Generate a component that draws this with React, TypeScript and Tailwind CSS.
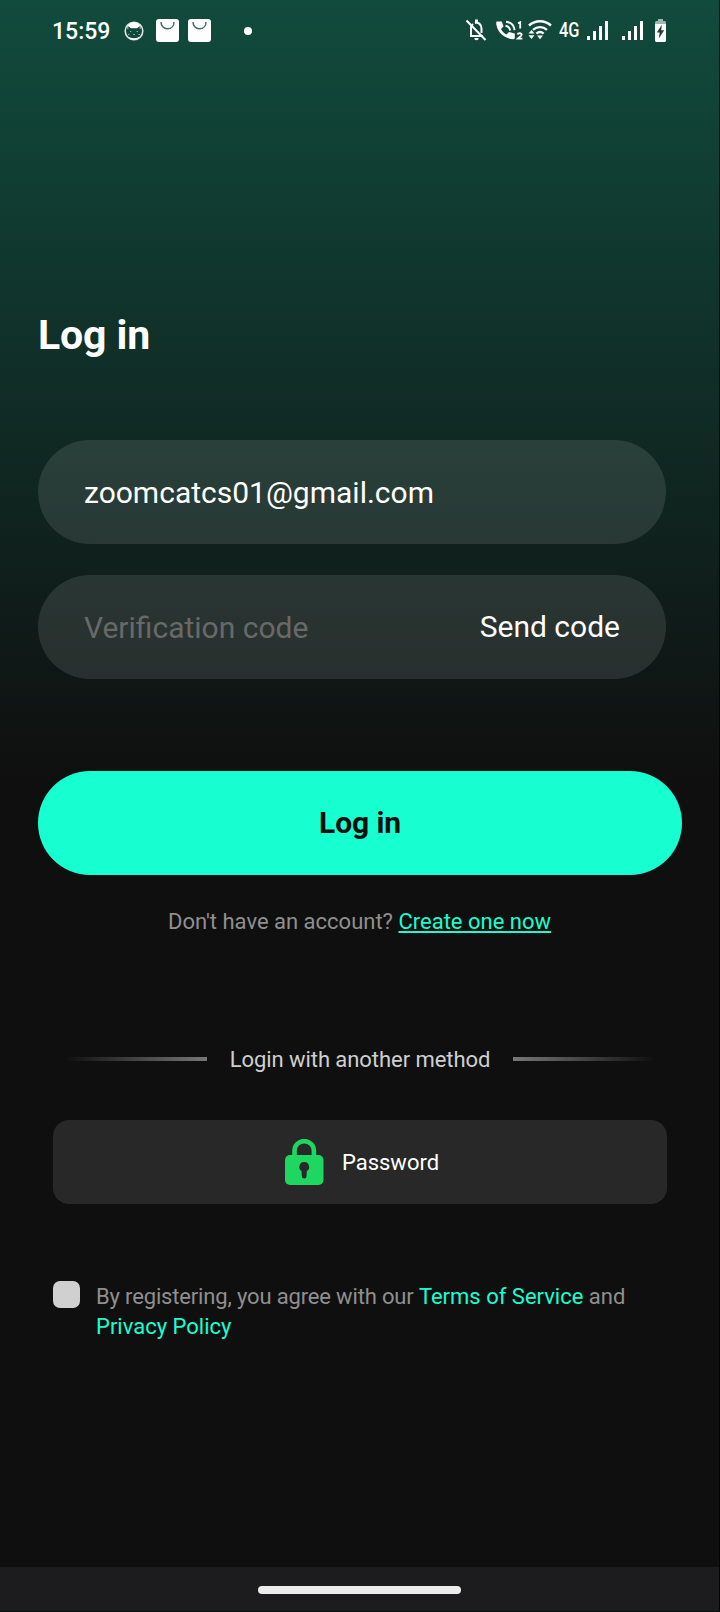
import React from "react";

function BellOff() {
  return (
    <svg className="block h-6 w-[23px]" viewBox="0 0 23 24" fill="none">
      <path d="M5 18h13M6 18V10.500a5 5.500 0 0 1 2-4.500M10 5a5 5.500 0 0 1 6.500 5.500V15" stroke="#fff" strokeWidth="2" />
      <path d="M10 1.500h3v3h-3zM9.300 20h4.400a2.200 2.200 0 0 1-4.400 0z" fill="#fff" />
      <path d="M1.500 2.500 20.500 22" stroke="#fff" strokeWidth="2" />
    </svg>
  );
}

function CallIcon() {
  return (
    <svg className="block h-6 w-[28px]" viewBox="0 0 28 24" fill="none">
      <path d="M1.200 3.500h4.600l1.700 5-2.500 2.500c1.300 2.600 3 4.300 5.500 5.500l2.500-2.500 5.800 1.600V20c0 .7-.5 1.200-1.200 1.200C8.300 21.200.2 13.500.2 4.600c0-.6.4-1.100 1-1.100z" fill="#fff" />
      <path d="M9.500 7.800c2.700.4 4.300 2.100 4.700 4.700M10 3.700c4.800.5 8 3.700 8.500 8.500" stroke="#fff" strokeWidth="2" />
      <path d="M22 5.200l2.200-1v6.300M21.600 16.500c.3-1.700 4.300-1.700 4.100.3-.1 1.300-2.600 2.500-3.900 3.800h4.600" stroke="#fff" strokeWidth="1.800" />
    </svg>
  );
}

function WifiIcon() {
  return (
    <svg className="block h-6 w-6" viewBox="0 0 24 24" fill="none">
      <path d="M1 7.500c6.200-5.600 15.800-5.600 22 0M5 11.800c4.200-3.600 9.800-3.600 14 0M8.400 15.600c2.200-1.900 5-1.900 7.200 0" stroke="#fff" strokeWidth="2.400" />
      <path d="M9 17.500h6L12 21.300zM.5 15.500l3-3.500 3 3.500zM.5 17.200h6l-3 3.800z" fill="#fff" />
    </svg>
  );
}

function Signal() {
  return (
    <svg className="block h-[19px] w-[21px]" viewBox="0 0 21 19" fill="#fff">
      <path d="M0 15h3v4H0zM6 10h3v9H6zM12 5h3v14h-3zM18 0h3v19h-3z" />
    </svg>
  );
}

function Battery() {
  return (
    <svg className="block h-[23px] w-[11px]" viewBox="0 0 11 23">
      <path d="M3 0h5v2H3z" fill="#a0b5af" />
      <path d="M0 3.500C0 2.700.7 2 1.500 2h8c.8 0 1.500.7 1.500 1.500V5H0z" fill="#a0b5af" />
      <path d="M0 5h11v16.500c0 .8-.7 1.500-1.500 1.500h-8C.7 23 0 22.300 0 21.500z" fill="#fff" />
      <path d="M6.800 5.800 1.800 13.500h2.900L3.800 19.500l5.400-8.200H6.200z" fill="#263c36" />
    </svg>
  );
}

function CatIcon() {
  return (
    <svg className="block h-5 w-5" viewBox="0 0 20 20">
      <circle cx="10" cy="10" r="8.800" fill="none" stroke="#dce6e3" strokeWidth="1.600" />
      <path d="M3 6.500C4 3.300 6.500 1.500 10 1.500s6 1.800 7 5l-1-1.500-3 2.200H7L4 5z" fill="#fff" />
      <path d="M3.800 5v3M16.200 5v3" stroke="#dce6e3" strokeWidth=".8" />
      <path d="M4 15.800c3.500 1.800 8.500 1.800 12 0-1.300 1.900-3.500 3-6 3s-4.700-1.100-6-3z" fill="#fff" />
      <path d="M6 10.500h1.300M12.700 10.500H14M9.200 13.500h1.600M4 13.500h1.500M14.500 13.500h1.500" stroke="#8fb0a7" strokeWidth="1" />
    </svg>
  );
}

function Bag() {
  return (
    <svg className="block h-[23px] w-[23px]" viewBox="0 0 23 23">
      <rect width="23" height="23" rx="3" fill="#fff" />
      <path d="M5 3c0 3.800 2.500 6.800 6.500 6.800S18 6.800 18 3" fill="none" stroke="#407066" strokeWidth="1.500" />
    </svg>
  );
}

function Lock() {
  return (
    <svg className="block h-[46px] w-[39px]" viewBox="0 0 39 46">
      <path d="M9.500 18v-6.200a9.700 9.700 0 0 1 19.400 0V18" fill="none" stroke="#1ed760" strokeWidth="4.600" />
      <rect y="16" width="38.500" height="30" rx="5" fill="#1ed760" />
      <path d="M19.200 23a4.900 4.900 0 0 1 2.700 9l-.4 5.200a2.300 2.300 0 0 1-4.600 0l-.4-5.200a4.900 4.900 0 0 1 2.700-9z" fill="#282828" />
    </svg>
  );
}

function StatusBar() {
  return (
    <header className="flex h-[61px] items-center text-white">
      <span className="ml-[52px] w-[72px] pt-[2px] text-[23px] font-medium leading-[60px]">15:59</span>
      <CatIcon />
      <div className="ml-3 flex gap-[9px]">
        <Bag />
        <Bag />
      </div>
      <span className="ml-[33px] size-2 rounded-full bg-white" />
      <div className="ml-[213px] flex items-center pb-px">
        <BellOff />
        <span className="ml-2"><CallIcon /></span>
        <span className="ml-1"><WifiIcon /></span>
        <span className="ml-[7px] w-[28px] origin-left scale-x-[0.82] text-[20px] font-medium leading-[60px]">4G</span>
        <Signal />
        <span className="ml-[14px]"><Signal /></span>
        <span className="ml-3"><Battery /></span>
      </div>
    </header>
  );
}

export default function App() {
  return (
    <div className="flex h-[1612px] w-[720px] flex-col border-r border-b border-black/70 bg-[#0f0f0f] bg-[linear-gradient(to_bottom,#114b3d_0px,#0f0f0f_780px)] font-['Roboto',sans-serif]">
      <StatusBar />
      <main className="flex flex-1 flex-col">
        <h1 className="mt-[249px] ml-[38px] text-[41px] font-bold leading-[50px] tracking-[-0.1px] text-white">Log in</h1>
        <div className="mt-20 ml-[38px] flex h-[104px] w-[628px] items-center rounded-[52px] bg-white/[0.105] px-[46px] text-[30px] text-white">
          <span>zoomcatcs01@gmail.com</span>
        </div>
        <div className="mt-[31px] ml-[38px] flex h-[104px] w-[628px] items-center justify-between rounded-[52px] bg-white/[0.105] px-[46px] text-[30px]">
          <span className="text-[#696969]">Verification code</span>
          <button className="pb-[2px] text-white">Send code</button>
        </div>
        <button className="mt-[92px] ml-[38px] h-[104px] w-[644px] rounded-[52px] bg-[#17ffd1] pb-px text-[30px] font-bold tracking-[-0.1px] text-[#0f0f0f]">Log in</button>
        <p className="mt-8 text-center text-[22px] leading-[30px] text-[#8f8f8f]">
          Don't have an account? <a className="text-[#17ffd1] underline">Create one now</a>
        </p>
        <div className="mt-[107px] ml-[65px] flex h-[30px] w-[590px] items-center justify-between">
          <span className="h-1 w-[142px] bg-linear-to-l from-[#777] to-transparent" />
          <span className="text-[22px] tracking-[-0.06px] text-[#cfcfcf]">Login with another method</span>
          <span className="h-1 w-[142px] bg-linear-to-r from-[#777] to-transparent" />
        </div>
        <button className="mt-[46px] ml-[53px] flex h-[84px] w-[614px] items-center justify-center gap-[18px] rounded-2xl bg-[#282828] pl-1 text-[22px] text-white">
          <Lock />
          <span>Password</span>
        </button>
        <div className="mt-[77px] ml-[53px] flex gap-4">
          <span className="size-[27px] rounded-[7px] bg-[#d0d0d0]" />
          <p className="pt-px text-[22px] leading-[30px] text-[#8f8f8f]">
            <span className="tracking-[-0.16px]">By registering, you agree with our </span>
            <a className="text-[#17ffd1]">Terms of Service</a> and<br />
            <a className="text-[#17ffd1]">Privacy Policy</a>
          </p>
        </div>
      </main>
      <footer className="flex h-[44px] items-center bg-[#1c1c1e] pt-px pl-[258px]">
        <span className="h-2 w-[203px] rounded-full bg-[#ececec]" />
      </footer>
    </div>
  );
}
